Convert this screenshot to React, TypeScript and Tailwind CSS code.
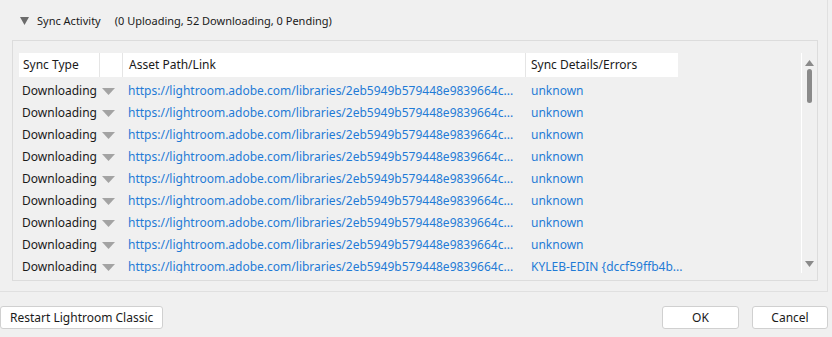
import React from "react";

const link = "https://lightroom.adobe.com/libraries/2eb5949b579448e9839664c...";

const rows = [
  "unknown",
  "unknown",
  "unknown",
  "unknown",
  "unknown",
  "unknown",
  "unknown",
  "unknown",
  "KYLEB-EDIN {dccf59ffb4b...",
];

function Caret() {
  return (
    <svg width="13" height="7" viewBox="0 0 13 7">
      <path d="M0 0 L13 0 L6.5 7 Z" fill="#a3a3a3" />
    </svg>
  );
}

export default function App() {
  return (
    <div
      className="w-[832px] h-[337px] bg-[#f0f0f0] overflow-hidden text-[12px] text-[#1a1a1a]"
      style={{ fontFamily: '"Noto Sans", "Open Sans", sans-serif' }}
    >
      <div className="w-[828px] h-[292px] border-r border-b border-[#e0e0e0] flex flex-col">
        <div className="h-[40px] flex items-center pl-[20px] pt-[2px] text-[11px]">
          <svg width="9" height="8" viewBox="0 0 9 8" className="mr-[8px]">
            <path d="M0 0 L9 0 L4.5 8 Z" fill="#6b6b6b" />
          </svg>
          <span>Sync Activity</span>
          <span className="ml-[14px]">(0 Uploading, 52 Downloading, 0 Pending)</span>
        </div>
        <div className="ml-[12px] w-[806px] h-[241px] border border-[#dcdcdc] flex">
          <div className="flex-1 pl-[6px] pt-[12px]">
            <div className="flex h-[24px] items-center bg-white w-[659px]">
              <div className="w-[81px] h-full pl-[4px] flex items-center border-r border-[#e5e5e5]">
                Sync Type
              </div>
              <div className="w-[23px] h-full border-r border-[#e5e5e5]" />
              <div className="w-[403px] h-full pl-[6px] flex items-center border-r border-[#e5e5e5]">
                Asset Path/Link
              </div>
              <div className="w-[152px] h-full pl-[5px] flex items-center">Sync Details/Errors</div>
            </div>
            <div className="h-[196px] pt-[3px] overflow-hidden">
              {rows.map((d, i) => (
                <div key={i} className="flex h-[22px] items-center whitespace-nowrap">
                  <div className="w-[81px] pl-[3px]">Downloading</div>
                  <div className="w-[23px] flex items-center pl-[2px]">
                    <Caret />
                  </div>
                  <div className="w-[403px] pl-[5px] text-[#1f7bd6] overflow-hidden">{link}</div>
                  <div className="w-[152px] pl-[5px] text-[#1f7bd6]">{d}</div>
                </div>
              ))}
            </div>
          </div>
          <div className="w-[16px] mt-[12px] mb-[7px] border-l border-white flex flex-col items-center pt-[7px] pb-[6px]">
            <svg width="9" height="6" viewBox="0 0 9 6">
              <path d="M0 6 L9 6 L4.5 0 Z" fill="#8a8a8a" />
            </svg>
            <div className="w-[5px] h-[34px] mt-[3px] rounded-full bg-[#8a8a8a]" />
            <div className="flex-1" />
            <svg width="9" height="6" viewBox="0 0 9 6">
              <path d="M0 0 L9 0 L4.5 6 Z" fill="#8a8a8a" />
            </svg>
          </div>
        </div>
      </div>
      <div className="flex items-center mt-[14px] pr-[4px]">
        <button className="h-[23px] px-[9px] bg-white border border-[#d0d0d0] rounded-[3px] text-[12px]">
          Restart Lightroom Classic
        </button>
        <div className="flex-1" />
        <button className="w-[77px] h-[23px] bg-white border border-[#d0d0d0] rounded-[3px] text-[12px]">
          OK
        </button>
        <button className="w-[76px] h-[23px] ml-[13px] bg-white border border-[#d0d0d0] rounded-[3px] text-[12px]">
          Cancel
        </button>
      </div>
    </div>
  );
}
